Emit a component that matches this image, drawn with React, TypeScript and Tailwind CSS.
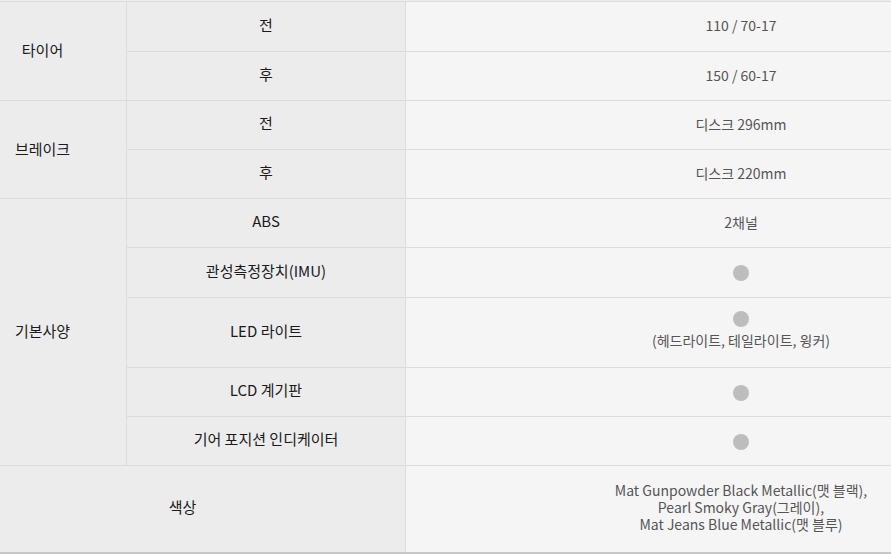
import React from "react";

const font = { fontFamily: '"Noto Sans CJK KR", "Noto Sans", sans-serif' };

function Dot() {
  return <span className="block w-4 h-4 rounded-full bg-[#bdbdbd]" />;
}

type Sub = { label: React.ReactNode; value: React.ReactNode; h: string };

function Group({ title, subs, last }: { title: string; subs: Sub[]; last?: boolean }) {
  return (
    <div className={`flex ${last ? "" : "border-b border-[#dcdcdc]"}`}>
      <div className="w-[127px] shrink-0 border-r border-[#dcdcdc] bg-[#ececec] flex items-center justify-center pr-[41px] pb-[2px] text-[15px] text-[#1a1a1a]">
        {title}
      </div>
      <div className="flex-1 flex flex-col">
        {subs.map((s, i) => (
          <div key={i} className={`flex ${s.h} ${i < subs.length - 1 ? "border-b border-[#dcdcdc]" : ""}`}>
            <div className="w-[279px] shrink-0 border-r border-[#dcdcdc] bg-[#ececec] flex items-center justify-center pb-[4px] text-[15px] text-[#1a1a1a]">
              {s.label}
            </div>
            <div className="flex-1 bg-[#f5f5f5] flex flex-col items-center justify-center pb-[3px] text-[#555]">
              {s.value}
            </div>
          </div>
        ))}
      </div>
    </div>
  );
}

export default function App() {
  return (
    <div className="w-[891px] h-[555px] overflow-hidden bg-white" style={font}>
      <div className="w-[1076px] text-[14px] leading-5">
        <div className="h-px bg-[#ececec]" />
        <div className="border-t border-[#dcdcdc]">
          <Group
            title="타이어"
            subs={[
              { label: "전", value: "110 / 70-17", h: "h-[50px]" },
              { label: "후", value: "150 / 60-17", h: "h-[48px]" },
            ]}
          />
          <Group
            title="브레이크"
            subs={[
              { label: "전", value: "디스크 296mm", h: "h-[49px]" },
              { label: "후", value: "디스크 220mm", h: "h-[48px]" },
            ]}
          />
          <Group
            title="기본사양"
            subs={[
              { label: "ABS", value: "2채널", h: "h-[49px]" },
              { label: "관성측정장치(IMU)", value: <span className="mt-[4px]"><Dot /></span>, h: "h-[50px]" },
              {
                label: "LED 라이트",
                value: (
                  <>
                    <span className="mt-[-2px]"><Dot /></span>
                    <span className="mt-[3px]">(헤드라이트, 테일라이트, 윙커)</span>
                  </>
                ),
                h: "h-[70px]",
              },
              { label: "LCD 계기판", value: <span className="mt-[4px]"><Dot /></span>, h: "h-[49px]" },
              { label: "기어 포지션 인디케이터", value: <span className="mt-[4px]"><Dot /></span>, h: "h-[48px]" },
            ]}
          />
          <div className="flex h-[88px] border-b-2 border-[#c8c8c8]">
            <div className="w-[406px] shrink-0 border-r border-[#dcdcdc] bg-[#ececec] flex items-center justify-center pr-[40px] pb-[4px] text-[15px] text-[#1a1a1a]">
              색상
            </div>
            <div className="flex-1 bg-[#f5f5f5] flex flex-col items-center justify-center text-[#555] leading-[17px] text-center pb-[4px]">
              <span>Mat Gunpowder Black Metallic(맷 블랙),</span>
              <span>Pearl Smoky Gray(그레이),</span>
              <span>Mat Jeans Blue Metallic(맷 블루)</span>
            </div>
          </div>
        </div>
      </div>
    </div>
  );
}
